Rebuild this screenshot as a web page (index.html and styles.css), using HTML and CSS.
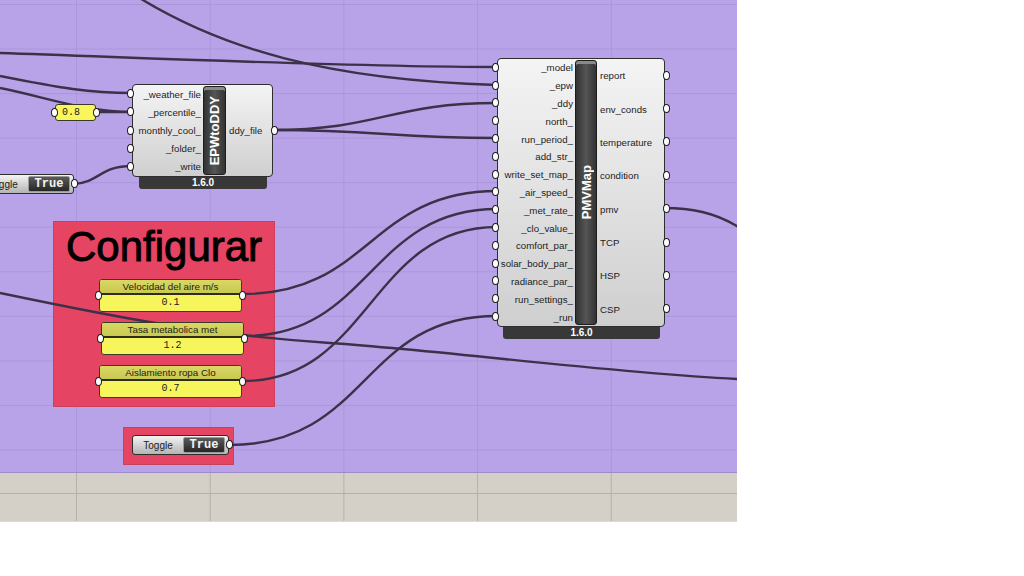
FILE: index.html
```html
<!DOCTYPE html>
<html lang="en">
<head>
    <meta charset="UTF-8">
    <title>PMVMap - Grasshopper</title>
    <link rel="stylesheet" href="styles.css">
</head>
<body>
<div class="app">

    <!-- Canvas -->
    <div class="canvas">

        <!-- Groups -->
        <div class="group group-config">
            <div class="group-title">Configurar</div>
            <div class="num num-air">
                <div class="num-head">Velocidad del aire m/s</div>
                <div class="num-val">0.1</div>
                <i class="grip grip-in"></i><i class="grip grip-out"></i>
            </div>
            <div class="num num-met">
                <div class="num-head">Tasa metabolica met</div>
                <div class="num-val">1.2</div>
                <i class="grip grip-in"></i><i class="grip grip-out"></i>
            </div>
            <div class="num num-clo">
                <div class="num-head">Aislamiento ropa Clo</div>
                <div class="num-val">0.7</div>
                <i class="grip grip-in"></i><i class="grip grip-out"></i>
            </div>
        </div>

        <div class="group group-run">
            <div class="toggle">
                <span class="toggle-label">Toggle</span>
                <span class="toggle-value">True</span>
                <i class="grip grip-out"></i>
            </div>
        </div>

        <!-- Wires -->
        <svg class="wires" width="737" height="472" viewBox="0 0 737 472">
            <path d="M130 -8 C220 50, 330 80, 497 85"/>
            <path d="M0 53 C150 58, 350 67, 497 67"/>
            <path d="M0 76 C60 88, 90 93, 132 93"/>
            <path d="M0 88 C50 98, 80 111, 132 112"/>
            <path d="M97 112 L132 112"/>
            <path d="M74 184 C100 182, 100 166, 132 166"/>
            <path d="M272 130 C380 130, 390 103, 497 103"/>
            <path d="M272 130 C380 130, 390 138, 497 138"/>
            <path d="M243 294 C370 294, 370 191, 497 191"/>
            <path d="M245 336 C370 336, 370 209, 497 209"/>
            <path d="M243 381 C370 381, 370 227, 497 227"/>
            <path d="M229 445 C370 445, 360 316, 497 316"/>
            <path d="M0 293 C120 318, 200 334, 330 343 S600 372, 737 379"/>
            <path d="M664 208 C690 208, 715 212, 740 228"/>
        </svg>

        <!-- Boolean toggle (left, cut off by the canvas edge) -->
        <div class="toggle toggle-left">
            <span class="toggle-label">Toggle</span>
            <span class="toggle-value">True</span>
            <i class="grip grip-out"></i>
        </div>

        <!-- Percentile panel -->
        <div class="num-small">
            <span>0.8</span>
            <i class="grip grip-in"></i><i class="grip grip-out"></i>
        </div>

        <!-- EPWtoDDY -->
        <div class="comp comp-epw">
            <div class="comp-body">
                <div class="ports ports-in">
                    <div class="port">_weather_file<i class="grip"></i></div>
                    <div class="port">_percentile_<i class="grip"></i></div>
                    <div class="port">monthly_cool_<i class="grip"></i></div>
                    <div class="port">_folder_<i class="grip"></i></div>
                    <div class="port">_write<i class="grip"></i></div>
                </div>
                <div class="comp-bar"><span class="comp-title">EPWtoDDY</span></div>
                <div class="ports ports-out">
                    <div class="port">ddy_file<i class="grip"></i></div>
                </div>
            </div>
            <div class="comp-foot">1.6.0</div>
        </div>

        <!-- PMVMap -->
        <div class="comp comp-pmv">
            <div class="comp-body">
                <div class="ports ports-in">
                    <div class="port">_model<i class="grip"></i></div>
                    <div class="port">_epw<i class="grip"></i></div>
                    <div class="port">_ddy<i class="grip"></i></div>
                    <div class="port">north_<i class="grip"></i></div>
                    <div class="port">run_period_<i class="grip"></i></div>
                    <div class="port">add_str_<i class="grip"></i></div>
                    <div class="port">write_set_map_<i class="grip"></i></div>
                    <div class="port">_air_speed_<i class="grip"></i></div>
                    <div class="port">_met_rate_<i class="grip"></i></div>
                    <div class="port">_clo_value_<i class="grip"></i></div>
                    <div class="port">comfort_par_<i class="grip"></i></div>
                    <div class="port">solar_body_par_<i class="grip"></i></div>
                    <div class="port">radiance_par_<i class="grip"></i></div>
                    <div class="port">run_settings_<i class="grip"></i></div>
                    <div class="port">_run<i class="grip"></i></div>
                </div>
                <div class="comp-bar"><span class="comp-title">PMVMap</span></div>
                <div class="ports ports-out">
                    <div class="port">report<i class="grip"></i></div>
                    <div class="port">env_conds<i class="grip"></i></div>
                    <div class="port">temperature<i class="grip"></i></div>
                    <div class="port">condition<i class="grip"></i></div>
                    <div class="port">pmv<i class="grip"></i></div>
                    <div class="port">TCP<i class="grip"></i></div>
                    <div class="port">HSP<i class="grip"></i></div>
                    <div class="port">CSP<i class="grip"></i></div>
                </div>
            </div>
            <div class="comp-foot">1.6.0</div>
        </div>
    </div>

    <!-- Bottom strip -->
    <div class="strip">
        <div class="strip-row"></div>
        <div class="strip-row"></div>
    </div>
</div>
</body>
</html>
```

FILE: styles.css
```css
/* Grasshopper canvas */
body {
    margin: 0;
    background-color: #fff;
    font-family: 'Liberation Sans', Arial, sans-serif;
    color: #1c1c1c;
}

.app {
    width: 737px;
}

.canvas {
    position: relative;
    height: 472px;
    overflow: hidden;
    background-color: #b9a3e8;
    background-image:
        linear-gradient(to right, #ab95db 1px, transparent 1px),
        linear-gradient(to bottom, #ab95db 1px, transparent 1px);
    background-size: 133.7px 100%, 100% 44.55px;
    background-position: 76px 0, 0 4px;
    border-bottom: 1px solid #9d8ac9;
}

/* Wires */
.wires {
    position: absolute;
    left: 0;
    top: 0;
    z-index: 1;
}

.wires path {
    fill: none;
    stroke: #3b3249;
    stroke-width: 2.4;
}

/* Groups */
.group {
    position: absolute;
    background-color: #e54462;
    border: 1px solid #c9405c;
    box-sizing: border-box;
}

.group-config {
    left: 53px;
    top: 221px;
    width: 222px;
    height: 186px;
    padding: 1px 0 0 45px;
    display: flex;
    flex-direction: column;
    gap: 10px;
}

.group-title {
    margin-left: -33px;
    margin-bottom: -2px;
    font-size: 42px;
    line-height: 48px;
    color: #000;
    -webkit-text-stroke: 0.9px #000;
}

.group-run {
    left: 123px;
    top: 427px;
    width: 111px;
    height: 38px;
    padding: 7px 0 0 8px;
}

/* Grips */
.grip {
    position: absolute;
    top: 50%;
    width: 5px;
    height: 7px;
    margin-top: -5px;
    background-color: #fff;
    border: 1.5px solid #1e1e1e;
    border-radius: 50%;
}

.grip-in {
    left: -5px;
}

.grip-out {
    right: -5px;
}

/* Number parameters */
.num {
    position: relative;
    z-index: 2;
    width: 143px;
    height: 33px;
    box-sizing: border-box;
    border: 1px solid #3a3a2a;
    border-radius: 3px;
    background-color: #f6f55c;
    display: flex;
    flex-direction: column;
}

.num-met {
    margin-left: 2px;
}

.num-head {
    height: 13px;
    line-height: 14px;
    font-size: 9.8px;
    text-align: center;
    background: linear-gradient(#d9d866, #c9c84e);
    border-bottom: 2px solid #2c2c20;
    border-radius: 2px 2px 0 0;
}

.num-val {
    flex: 1;
    font-family: 'Liberation Mono', 'Courier New', monospace;
    font-size: 10px;
    line-height: 16px;
    text-align: center;
}

.num-small {
    position: absolute;
    z-index: 2;
    left: 55px;
    top: 104px;
    width: 41px;
    height: 17px;
    box-sizing: border-box;
    border: 1px solid #3a3a2a;
    border-radius: 3px;
    background-color: #f8f65c;
    font-family: 'Liberation Mono', 'Courier New', monospace;
    font-size: 10px;
    line-height: 15px;
    padding-left: 6px;
}

/* Toggles */
.toggle {
    position: relative;
    z-index: 2;
    display: flex;
    align-items: center;
    width: 97px;
    height: 20px;
    box-sizing: border-box;
    border: 1px solid #2e2e2e;
    border-radius: 3px;
    background: linear-gradient(#f4f4f4, #b4b4b4);
}

.toggle-left {
    position: absolute;
    left: -23px;
    top: 174px;
}

.toggle-label {
    flex: 1;
    font-size: 10px;
    text-align: center;
    padding-top: 1px;
}

.toggle-value {
    width: 40px;
    height: 14px;
    margin-right: 3px;
    border: 1px solid #9a9a9a;
    border-radius: 2px;
    background: linear-gradient(#5a5a5a, #262626);
    color: #f2f2f2;
    font-family: 'Liberation Mono', 'Courier New', monospace;
    font-weight: bold;
    font-size: 12px;
    line-height: 14px;
    text-align: center;
}

/* Components */
.comp {
    position: absolute;
    z-index: 2;
}

.comp-epw {
    left: 132px;
    top: 84px;
    width: 141px;
}

.comp-pmv {
    left: 497px;
    top: 58px;
    width: 168px;
}

.comp-body {
    display: flex;
    border: 1px solid #2f2f2f;
    border-radius: 4px;
    background: linear-gradient(#f4f4f4, #cfcfcf);
}

.comp-epw .comp-body {
    height: 91px;
}

.comp-pmv .comp-body {
    height: 267px;
}

.ports {
    display: flex;
    flex-direction: column;
}

.ports-in {
    width: 70px;
}

.comp-pmv .ports-in {
    width: 77px;
}

.ports-out {
    flex: 1;
}

.port {
    position: relative;
    flex: 1;
    display: flex;
    align-items: center;
    font-size: 9.7px;
    white-space: nowrap;
}

.ports-in .port {
    justify-content: flex-end;
    padding-right: 2px;
}

.ports-in .grip {
    left: -6px;
}

.ports-out .port {
    padding-left: 3px;
}

.ports-out .grip {
    right: -6px;
}

.comp-bar {
    width: 21px;
    margin: 1px 0;
    display: flex;
    align-items: center;
    justify-content: center;
    border: 1px solid #1c1c1c;
    border-radius: 3px;
    background: linear-gradient(to right, #333, #555 50%, #333);
    box-shadow: inset 0 3px 0 #8a8a8a;
}

.comp-pmv .comp-bar {
    width: 20px;
}

.comp-title {
    writing-mode: vertical-rl;
    transform: rotate(180deg);
    color: #fff;
    font-weight: bold;
    font-size: 13px;
}

.comp-foot {
    height: 12px;
    margin: 0 6px 0 7px;
    background-color: #383838;
    color: #fff;
    font-size: 10px;
    font-weight: bold;
    line-height: 12px;
    text-align: center;
    border-radius: 0 0 3px 3px;
}

.comp-pmv .comp-foot {
    margin: 0 5px 0 6px;
}

/* Bottom strip */
.strip {
    height: 49px;
    background-color: #d4d0c8;
    background-image: linear-gradient(to right, #b5b1a9 1px, transparent 1px);
    background-size: 133.7px 100%;
    background-position: 76px 0;
}

.strip-row {
    height: 20px;
    border-bottom: 1px solid #b5b1a9;
}

.strip-row + .strip-row {
    height: 27px;
    border-bottom: 1px solid #dcd9d2;
}
```
